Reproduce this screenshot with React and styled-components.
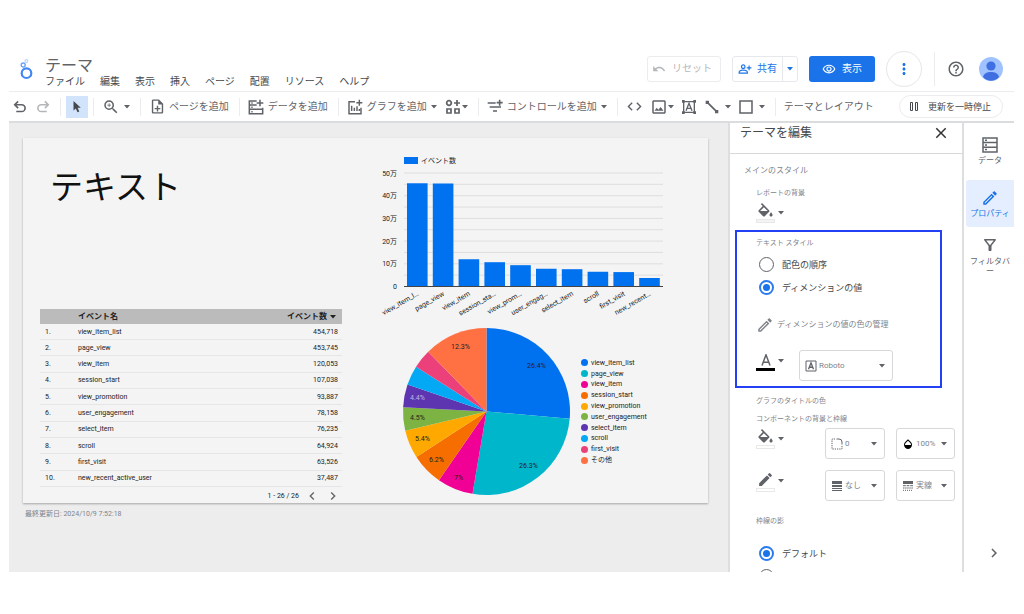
import React from "react";
import styled, { createGlobalStyle } from "styled-components";
import {
  MdUndo, MdZoomIn, MdCode, MdClose, MdHelpOutline, MdMoreVert, MdEdit, MdOutlineEdit,
  MdOutlineNoteAdd, MdOutlineImage, MdOutlineRemoveRedEye, MdOutlineFilterAlt, MdChevronRight,
  MdChevronLeft, MdOpacity, MdOutlinePersonAddAlt,
} from "react-icons/md";

const GlobalStyle = createGlobalStyle`
  *, *::before, *::after { box-sizing: border-box; }
  body {
    margin: 0;
    background: #fff;
    color: #5f6368;
    font-family: Roboto, "Noto Sans CJK JP", sans-serif;
    font-size: 10px;
  }
  button, select { font: inherit; color: inherit; margin: 0; }
  svg { display: block; flex: none; }
`;

/* ---------- frame ---------- */

const Frame = styled.div`
  display: flex;
  flex-direction: column;
  height: 100vh;
  padding: 46px 10px 42px 9px;
`;

const Header = styled.header`
  display: flex;
  align-items: center;
  flex: none;
  height: 46px;
  padding: 0 11px;
  border-bottom: 1px solid #ececee;
`;

const Brand = styled.div`
  display: flex;
  align-items: flex-start;
  gap: 12px;
  flex: 1;
  padding-top: 8px;
`;

const DocTitle = styled.h1`
  margin: 0;
  font-size: 16px;
  font-weight: 400;
  line-height: 18px;
`;

const Menu = styled.nav`
  display: flex;
  gap: 15px;
`;

const PlainButton = styled.button`
  display: flex;
  align-items: center;
  justify-content: center;
  gap: ${(p) => p.$gap || 0}px;
  padding: 0;
  border: 0;
  background: none;
  line-height: 14px;
  white-space: nowrap;
  color: ${(p) => p.$color || "inherit"};
`;

const MenuButton = styled(PlainButton)`
  color: #45484c;
`;

const Actions = styled.div`
  display: flex;
  align-items: center;
`;

const OutlineButton = styled(PlainButton)`
  height: 26px;
  padding: 0 8px 0 4px;
  border: 1px solid #ececee;
  border-radius: 3px;
`;

const SplitButton = styled.div`
  display: flex;
  height: 26px;
  margin-left: 11px;
  border: 1px solid #e6e8eb;
  border-radius: 3px;
  color: #1a73e8;
`;

const SplitPart = styled(PlainButton)`
  padding: 0 ${(p) => p.$pad}px;
  & + & { border-left: 1px solid #e6e8eb; }
`;

const ViewButton = styled(PlainButton)`
  width: 66px;
  height: 26px;
  margin-left: 11px;
  border-radius: 3px;
  background: #1a73e8;
  color: #fff;
`;

const RoundButton = styled(PlainButton)`
  width: 36px;
  height: 36px;
  margin: 0 12px 0 11px;
  border: 1px solid #e4e6e8;
  border-radius: 50%;
  color: #1a73e8;
`;

const HelpArea = styled.div`
  display: flex;
  align-items: center;
  gap: 14px;
  height: 34px;
  padding-left: 12px;
  border-left: 1px solid #ececee;
`;

/* ---------- toolbar ---------- */

const Toolbar = styled.div`
  display: flex;
  align-items: center;
  flex: none;
  height: 31px;
  padding: 0 11px 0 0;
  border-bottom: 2px solid #dadcde;
`;

const ToolGroup = styled.div`
  display: flex;
  align-items: center;
  gap: ${(p) => p.$gap || 8}px;
  height: 18px;
  padding: 0 10px 0 8px;
  &:first-child { padding: 0 8px 0 2px; }
  & + & { border-left: 1px solid #ececee; }
`;

const SelectTool = styled(PlainButton)`
  width: 22px;
  height: 22px;
  margin: 0 -5px 0 -3px;
  background: #d2e3fc;
`;

const PauseButton = styled(PlainButton)`
  height: 23px;
  margin-left: auto;
  padding: 0 11px 0 10px;
  border: 1px solid #ececee;
  border-radius: 12px;
  font-size: 9px;
  color: #45484c;
`;

/* ---------- workspace ---------- */

const Workspace = styled.div`
  display: flex;
  flex: 1;
  min-height: 0;
  overflow: hidden;
`;

const Canvas = styled.main`
  flex: 1;
  min-width: 0;
  padding: 15px 20px 0 14px;
  background: #ededed;
`;

const Report = styled.section`
  display: flex;
  gap: 33px;
  padding-left: 17px;
  background: #f4f4f4;
  box-shadow: 0 1px 2px rgba(0, 0, 0, 0.3);
`;

const TextColumn = styled.div`
  flex: 0 0 302px;
  padding-top: 30px;
`;

const ReportTitle = styled.h2`
  margin: 0 0 101px;
  padding-left: 10px;
  font-size: 33px;
  font-weight: 400;
  line-height: 40px;
  color: #111;
`;

const EventTable = styled.table`
  width: 100%;
  height: 178px;
  border-collapse: collapse;
  font-size: 7px;
  line-height: 10px;
  color: #222;

  th, td { padding: 0 4px; text-align: left; }
  th { height: 15px; background: #bbb; font-size: 8px; font-weight: 700; }
  td { border-bottom: 1px solid #e6e6e6; }
  td:first-child { padding-left: 5px; }
  th:first-child, td:first-child { width: 34px; }
  th:last-child, td:last-child { text-align: right; }
`;

const SortLabel = styled(PlainButton)`
  margin: 0 2px 0 auto;
  line-height: 10px;
  font-weight: 700;
`;

const Pager = styled.div`
  display: flex;
  align-items: center;
  justify-content: flex-end;
  gap: 5px;
  height: 16px;
  padding: 2px 1px 0 0;
  font-size: 7px;
  color: #222;
`;

const ChartColumn = styled.div`
  padding: 12px 0 2px;
`;

const PieRow = styled.div`
  display: flex;
  align-items: center;
  gap: 6px;
  padding: 5px 0 0 25px;
`;

const Legend = styled.ul`
  display: grid;
  grid-auto-rows: 1fr;
  height: 108px;
  margin: 0;
  padding: 0;
  list-style: none;
  font-size: 7px;
  line-height: 10px;
  color: #222;
`;

const LegendItem = styled.li`
  display: flex;
  align-items: center;
  gap: 3px;
  &::before {
    content: "";
    width: 7px;
    height: 7px;
    border-radius: 50%;
    background: ${(p) => p.$color};
  }
`;

const ChartText = styled.text`
  font-size: 7px;
  fill: ${(p) => p.$fill || "#222"};
`;

const Updated = styled.p`
  margin: 0;
  padding: 5px 2px;
  font-size: 7px;
  line-height: 12px;
  color: #80848a;
`;

/* ---------- theme panel ---------- */

const Panel = styled.aside`
  flex: 0 0 236px;
  overflow: hidden;
  border-left: 2px solid #dcdee0;
  border-right: 2px solid #dcdee0;
  background: #fff;
`;

const PanelHeader = styled.div`
  display: flex;
  align-items: center;
  justify-content: space-between;
  padding: 1px 12px 11px 10px;
  border-bottom: 1px solid #d6d8da;
`;

const PanelTitle = styled.h2`
  margin: 0;
  font-size: 12px;
  font-weight: 400;
  line-height: 18px;
  color: #45484c;
`;

const SectionTitle = styled.h3`
  margin: 11px 0 10px 14px;
  font-size: 8px;
  font-weight: 400;
  line-height: 12px;
  color: #80848a;
`;

const Block = styled.div`
  padding-left: 26px;
`;

const Highlight = styled.section`
  margin: 7px 20px 7px 5px;
  padding: 5px 0 5px 19px;
  border: 2px solid #2440f5;
`;

const Label = styled.h4`
  margin: ${(p) => p.$top || 0}px 0 3px;
  font-size: 7px;
  font-weight: 400;
  line-height: 12px;
  color: #80848a;
`;

const RadioGroup = styled.div`
  padding-top: ${(p) => p.$top || 0}px;
`;

const RadioRow = styled.label`
  display: flex;
  align-items: center;
  gap: 8px;
  height: 23px;
  padding-left: 3px;
  font-size: 9px;
  color: #45484c;
`;

const Radio = styled.input`
  appearance: none;
  display: grid;
  place-items: center;
  width: 15px;
  height: 15px;
  margin: 0;
  border: 1px solid #5f6368;
  border-radius: 50%;
  &:checked { border: 2px solid #2a7bf0; }
  &:checked::before {
    content: "";
    width: 7px;
    height: 7px;
    border-radius: 50%;
    background: #1a73e8;
  }
`;

const ManageButton = styled(PlainButton)`
  margin: 18px 0 17px;
  height: 16px;
  font-size: 8px;
  color: #80848a;
`;

const ControlRow = styled.div`
  display: flex;
  align-items: flex-start;
  gap: 11px;
  margin-bottom: ${(p) => p.$bottom || 0}px;
`;

const ColorButton = styled(PlainButton)`
  justify-content: flex-start;
  width: ${(p) => p.$width || 28}px;
`;

const Swatch = styled.span`
  display: flex;
  flex-direction: column;
  align-items: center;
  width: 19px;
  padding-top: ${(p) => (p.$solid ? 4 : 1)}px;
  &::after {
    content: "";
    width: 19px;
    height: ${(p) => (p.$solid ? 3 : 4)}px;
    border: 1px solid ${(p) => (p.$solid ? "#000" : "#e8e8e8")};
    background: ${(p) => p.$fill};
  }
`;

const SelectBox = styled.label`
  display: flex;
  align-items: center;
  width: ${(p) => p.$width}px;
  height: 31px;
  padding: 0 7px 0 5px;
  border: 1px solid #d6d8da;
  border-radius: 3px;
  font-size: 8px;
`;

const Select = styled.select`
  appearance: none;
  flex: 1;
  min-width: 0;
  padding: 0 0 0 2px;
  border: 0;
  background: none;
  line-height: 14px;
  color: #80848a;
`;

/* ---------- right rail ---------- */

const Rail = styled.nav`
  display: flex;
  flex-direction: column;
  flex: 0 0 50px;
  padding: 5px 0 10px 2px;
`;

const RailTab = styled(PlainButton)`
  flex-direction: column;
  justify-content: flex-start;
  height: ${(p) => (p.$on ? 47 : 52)}px;
  padding-top: 9px;
  border-radius: 3px 0 0 3px;
  background: ${(p) => (p.$on ? "#e4eefe" : "none")};
  color: ${(p) => (p.$on ? "#1a73e8" : "#5f6368")};
  font-size: 8px;
  line-height: 10px;
`;

const RailChevron = styled(PlainButton)`
  margin-top: auto;
  padding-left: 8px;
`;

/* ---------- icons ---------- */

const Caret = () => (
  <svg width="6" height="4" viewBox="0 0 6 4" aria-hidden="true"><path d="M0 0h6L3 3.5z" fill="currentColor" /></svg>
);

const Line = ({ size = 16, children, stroke = 2, ...rest }) => (
  <svg width={size} height={size} viewBox="0 0 24 24" fill="none" stroke="currentColor" strokeWidth={stroke} aria-hidden="true" {...rest}>
    {children}
  </svg>
);

const Logo = () => (
  <svg width="13" height="23" viewBox="0 -2 13 23" fill="none" aria-hidden="true">
    <circle cx="6.500" cy="14.200" r="4.800" stroke="#4285f4" strokeWidth="2.200" />
    <circle cx="3.200" cy="6" r="2" stroke="#6ba3f8" strokeWidth="1.400" />
    <circle cx="6.400" cy="2" r="1.400" stroke="#b9d3fb" strokeWidth="1.100" />
  </svg>
);

const Undo = () => (
  <Line size={18} stroke={2.2}><path d="M9.500 4.500 5 9l4.500 4.500M5.500 9h8.800a4.500 4.500 0 0 1 0 9H7" /></Line>
);

const Redo = () => (
  <Line size={18} stroke={2.2}><path d="M14.500 4.500 19 9l-4.500 4.500M18.500 9H9.700a4.500 4.500 0 0 0 0 9H17" /></Line>
);

const Pointer = () => (
  <svg width="10" height="13" viewBox="0 0 10 13" aria-hidden="true">
    <path d="M1.500 1v9.500l2.300-2 1.700 3.700 1.800-.8-1.700-3.600h3.200z" fill="#45484c" />
  </svg>
);

const AddData = () => (
  <Line stroke={2.3}><path d="M13 3H2v19h20v-9M2 9h11M2 15.500h20M18 1v10M13 6h10" /><path d="M5 6h2M5 12.300h2M5 19h2" /></Line>
);

const AddChart = () => (
  <Line stroke={2.2}><path d="M12 4H3v18h18v-9M18.500 1v9M14 5.500h9M7 10v8M11 13v5M15 11v7M18.500 15v3" /></Line>
);

const Community = () => (
  <Line stroke={2.6}><circle cx="6" cy="6" r="3.500" /><path d="M3 15h6v6H3zM15 15h6v6h-6zM18 1.500v9M13.500 6h9" /></Line>
);

const AddControl = () => (
  <Line stroke={2.4}><path d="M1 6h12M4 12h17M9 18h6M19 1v9M14.500 5.500h9" /></Line>
);

const TextBox = () => (
  <Line>
    <path d="M4 4h16v16H4z" />
    <path d="M7.500 17.500 12 6.500l4.500 11M9 14h6" />
    <path d="M1.500 1.500h4v4h-4zM18.500 1.500h4v4h-4zM1.500 18.500h4v4h-4zM18.500 18.500h4v4h-4z" fill="currentColor" stroke="none" />
  </Line>
);

const LineTool = () => (
  <Line stroke={2.6}><path d="m5 5 14 14" /><path d="M2.500 2.500h5v5h-5zM16.500 16.500h5v5h-5z" fill="currentColor" stroke="none" /></Line>
);

const Square = () => <Line stroke={2.3}><path d="M3 3h18v18H3z" /></Line>;

const Bucket = () => (
  <svg width="19" height="16" viewBox="0 0 24 20" fill="currentColor" aria-hidden="true">
    <path d="M16.560 8.940 7.620 0 6.210 1.410l2.380 2.380-5.150 5.150c-.59.59-.59 1.540 0 2.120l5.500 5.500c.29.29.68.44 1.060.44s.77-.15 1.060-.44l5.500-5.500c.59-.58.59-1.530 0-2.120zM5.210 10 10 5.210 14.790 10H5.210zM19 11.500s-2 2.170-2 3.500c0 1.100.9 2 2 2s2-.9 2-2c0-1.330-2-3.500-2-3.500z" />
  </svg>
);

const LetterA = () => (
  <svg width="16" height="14" viewBox="0 0 16 14" fill="none" stroke="currentColor" strokeWidth="1.500" aria-hidden="true">
    <path d="M4 11.500 8 .8l4 10.700M5.400 8.300h5.200" />
  </svg>
);

const FontBox = () => (
  <Line size={12}><path d="M2 2h20v20H2z" /><path d="M7 18.500 12 5.500l5 13M8.500 14.500h7" strokeWidth="2.600" /></Line>
);

const Corner = () => (
  <Line size={12}>
    <path d="M11 2h5a6 6 0 0 1 6 6v5" />
    <path d="M8 2H2v20h20v-6" strokeDasharray="2.500 2" />
  </Line>
);

const Weight = () => (
  <svg width="12" height="10" viewBox="0 0 12 10" fill="#5f6368" aria-hidden="true">
    <path d="M1 0h10v3H1zM1 4h10v2H1zM1 7h10v1H1zM1 9h10v1H1z" />
  </svg>
);

const Dashes = () => (
  <svg width="12" height="10" viewBox="0 0 12 10" stroke="#5f6368" aria-hidden="true">
    <path d="M1 1.500h10" strokeWidth="3" />
    <path d="M1 4.700h10" strokeDasharray="2.800 .8" />
    <path d="M1 7h10" strokeDasharray="1.500 .6" />
    <path d="M1 9.300h10" strokeDasharray="1 1" />
  </svg>
);

const DataTable = () => (
  <svg width="16" height="16" viewBox="0 0 16 16" fill="none" stroke="currentColor" strokeWidth="1.500" aria-hidden="true">
    <path d="M1 1h14v14H1zM1 5.600h14M1 10.300h14" />
    <path d="M3 3.300h2M3 8h2M3 12.600h2" />
  </svg>
);

const Pause = () => (
  <svg width="8" height="9" viewBox="0 0 8 9" fill="none" stroke="currentColor" aria-hidden="true">
    <path d="M.5.5h2v8h-2zM5.500.5h2v8h-2z" />
  </svg>
);

const Avatar = () => (
  <svg width="24" height="24" viewBox="0 0 24 24" aria-hidden="true">
    <circle cx="12" cy="12" r="12" fill="#a0c3ff" />
    <circle cx="12" cy="9" r="4.600" fill="#3f6fe0" />
    <path d="M4 20c1-4 4.500-5 8-5s7 1 8 5c-2 2.500-5 3.700-8 3.700S6 22.500 4 20z" fill="#3f6fe0" />
  </svg>
);

/* ---------- data ---------- */

const events = [
  ["view_item_list", 454718, "#0072f0", "view_item_l…", "26.4%", 50, -46],
  ["page_view", 453745, "#00b6cb", "page_view", "26.3%", 42, 54],
  ["view_item", 120053, "#f10096", "view_item", "7%", -28, 66],
  ["session_start", 107038, "#f66d00", "session_sta…", "6.2%", -50, 48],
  ["view_promotion", 93887, "#ffa800", "view_prom…", "5.4%", -64, 27],
  ["user_engagement", 78158, "#7cb342", "user_engag…", "4.5%", -69, 6],
  ["select_item", 76235, "#5e35b1", "select_item", "4.4%", -69, -14],
  ["scroll", 64924, "#03a9f4", "scroll"],
  ["first_visit", 63526, "#ec407a", "first_visit"],
  ["new_recent_active_user", 37487, "#0072f0", "new_recent…"],
];

const slices = [...events.slice(0, 9), ["その他", 212100, "#ff7043", "", "12.3%", -26, -65]];

function BarChart() {
  return (
    <svg width="295" height="170" viewBox="0 0 295 170" role="img" aria-label="イベント数">
      <rect x="29" y="7" width="14" height="7" fill="#0072f0" />
      <ChartText x="46" y="13">イベント数</ChartText>
      {Array.from({ length: 10 }, (_, i) => (
        <path key={i} d={`M29 ${23 + i * 11.35}h259`} stroke="#dedede" />
      ))}
      {["50万", "40万", "30万", "20万", "10万", "0"].map((t, i) => (
        <ChartText key={t} x="22" y={25.5 + i * 22.7} textAnchor="end">{t}</ChartText>
      ))}
      {events.map(([name, value, , short], i) => {
        const h = (value / 500000) * 113.5;
        const x = 32 + i * 25.8;
        return (
          <g key={name}>
            <rect x={x} y={136.5 - h} width="20.600" height={h} fill="#0072f0" />
            <ChartText textAnchor="end" transform={`translate(${x + 12} 145) rotate(-30)`}>{short}</ChartText>
          </g>
        );
      })}
      <path d="M29 136.500h259" stroke="#444" />
    </svg>
  );
}

function PieChart() {
  const total = slices.reduce((s, e) => s + e[1], 0);
  const c = 86.5;
  const r = 83.5;
  let a = 0;
  const paths = slices.map(([name, v, color]) => {
    const b = a + (v / total) * Math.PI * 2;
    const d = `M${c} ${c}L${c + r * Math.sin(a)} ${c - r * Math.cos(a)}A${r} ${r} 0 0 1 ${c + r * Math.sin(b)} ${c - r * Math.cos(b)}z`;
    a = b;
    return <path key={name} d={d} fill={color} />;
  });
  return (
    <svg width="175" height="173" viewBox="0 0 175 173" role="img" aria-label="イベント数の割合">
      {paths}
      {slices.filter((e) => e[4]).map(([name, , , , pct, dx, dy]) => (
        <ChartText key={name} x={c + dx} y={c + dy + 2.5} textAnchor="middle" $fill={name === "select_item" ? "#c4b3e0" : "#222"}>{pct}</ChartText>
      ))}
    </svg>
  );
}

function IconSelect({ icon, value, width, label }) {
  return (
    <SelectBox $width={width}>
      {icon}
      <Select aria-label={label} defaultValue={value}><option>{value}</option></Select>
      <Caret />
    </SelectBox>
  );
}

function ColorControl({ label, icon, fill = "#fff", solid, width }) {
  return (
    <ColorButton aria-label={label} $gap={3} $width={width}>
      <Swatch $fill={fill} $solid={solid}>{icon}</Swatch>
      <Caret />
    </ColorButton>
  );
}

export default function App() {
  return (
    <Frame>
      <GlobalStyle />
      <Header>
        <Brand>
          <Logo />
          <div>
            <DocTitle>テーマ</DocTitle>
            <Menu>
              {["ファイル", "編集", "表示", "挿入", "ページ", "配置", "リソース", "ヘルプ"].map((m) => (
                <MenuButton key={m}>{m}</MenuButton>
              ))}
            </Menu>
          </div>
        </Brand>
        <Actions>
          <OutlineButton $gap={6} $color="#b4b7ba"><MdUndo size={14} />リセット</OutlineButton>
          <SplitButton>
            <SplitPart $gap={5} $pad={5}><MdOutlinePersonAddAlt size={14} />共有</SplitPart>
            <SplitPart $pad={4} aria-label="共有オプション"><Caret /></SplitPart>
          </SplitButton>
          <ViewButton $gap={6}><MdOutlineRemoveRedEye size={14} />表示</ViewButton>
          <RoundButton aria-label="その他"><MdMoreVert size={18} /></RoundButton>
          <HelpArea>
            <PlainButton aria-label="ヘルプ"><MdHelpOutline size={18} /></PlainButton>
            <PlainButton aria-label="アカウント"><Avatar /></PlainButton>
          </HelpArea>
        </Actions>
      </Header>

      <Toolbar>
        <ToolGroup $gap={5}>
          <PlainButton aria-label="元に戻す"><Undo /></PlainButton>
          <PlainButton aria-label="やり直し" $color="#b4b7ba"><Redo /></PlainButton>
        </ToolGroup>
        <ToolGroup><SelectTool aria-label="選択"><Pointer /></SelectTool></ToolGroup>
        <ToolGroup><PlainButton aria-label="ズーム" $gap={4}><MdZoomIn size={18} /><Caret /></PlainButton></ToolGroup>
        <ToolGroup><PlainButton $gap={3}><MdOutlineNoteAdd size={17} />ページを追加</PlainButton></ToolGroup>
        <ToolGroup><PlainButton $gap={4}><AddData />データを追加</PlainButton></ToolGroup>
        <ToolGroup>
          <PlainButton $gap={4}><AddChart />グラフを追加<Caret /></PlainButton>
          <PlainButton aria-label="コミュニティ" $gap={1}><Community /><Caret /></PlainButton>
        </ToolGroup>
        <ToolGroup><PlainButton $gap={4}><AddControl />コントロールを追加<Caret /></PlainButton></ToolGroup>
        <ToolGroup $gap={7}>
          <PlainButton aria-label="埋め込み"><MdCode size={17} /></PlainButton>
          <PlainButton aria-label="画像"><MdOutlineImage size={18} /><Caret /></PlainButton>
          <PlainButton aria-label="テキスト"><TextBox /></PlainButton>
          <PlainButton aria-label="線" $gap={5}><LineTool /><Caret /></PlainButton>
          <PlainButton aria-label="図形" $gap={5}><Square /><Caret /></PlainButton>
        </ToolGroup>
        <ToolGroup><PlainButton>テーマとレイアウト</PlainButton></ToolGroup>
        <PauseButton $gap={10}><Pause />更新を一時停止</PauseButton>
      </Toolbar>

      <Workspace>
        <Canvas>
          <Report>
            <TextColumn>
              <ReportTitle>テキスト</ReportTitle>
              <EventTable>
                <thead>
                  <tr>
                    <th aria-label="番号" />
                    <th>イベント名</th>
                    <th><SortLabel $gap={3}>イベント数<Caret /></SortLabel></th>
                  </tr>
                </thead>
                <tbody>
                  {events.map(([name, value], i) => (
                    <tr key={name}>
                      <td>{i + 1}.</td>
                      <td>{name}</td>
                      <td>{value.toLocaleString("en-US")}</td>
                    </tr>
                  ))}
                </tbody>
              </EventTable>
              <Pager>
                1 - 26 / 26
                <PlainButton aria-label="前へ" $color="#5f6368"><MdChevronLeft size={16} /></PlainButton>
                <PlainButton aria-label="次へ" $color="#5f6368"><MdChevronRight size={16} /></PlainButton>
              </Pager>
            </TextColumn>
            <ChartColumn>
              <BarChart />
              <PieRow>
                <PieChart />
                <Legend>
                  {slices.map(([name, , color]) => <LegendItem key={name} $color={color}>{name}</LegendItem>)}
                </Legend>
              </PieRow>
            </ChartColumn>
          </Report>
          <Updated>最終更新日: 2024/10/9 7:52:18</Updated>
        </Canvas>

        <Panel>
          <PanelHeader>
            <PanelTitle>テーマを編集</PanelTitle>
            <PlainButton aria-label="閉じる" $color="#333"><MdClose size={18} /></PlainButton>
          </PanelHeader>
          <SectionTitle>メインのスタイル</SectionTitle>
          <Block>
            <Label>レポートの背景</Label>
            <ColorControl label="レポートの背景" icon={<Bucket />} fill="#f4f4f4" />
          </Block>
          <Highlight>
            <Label>テキスト スタイル</Label>
            <RadioGroup $top={1} role="radiogroup" aria-label="テキスト スタイル">
              <RadioRow><Radio type="radio" name="text-style" />配色の順序</RadioRow>
              <RadioRow><Radio type="radio" name="text-style" defaultChecked />ディメンションの値</RadioRow>
            </RadioGroup>
            <ManageButton $gap={3}><MdOutlineEdit size={18} />ディメンションの値の色の管理</ManageButton>
            <ControlRow>
              <ColorControl label="文字色" icon={<LetterA />} fill="#000" solid width={32} />
              <IconSelect icon={<FontBox />} value="Roboto" width={94} label="フォント" />
            </ControlRow>
          </Highlight>
          <Block>
            <Label>グラフのタイトルの色</Label>
            <Label $top={6}>コンポーネントの背景と枠線</Label>
            <ControlRow $bottom={11}>
              <ColorControl label="背景色" icon={<Bucket />} width={58} />
              <IconSelect icon={<Corner />} value="0" width={60} label="角の丸み" />
              <IconSelect icon={<MdOpacity size={12} color="#000" />} value="100%" width={59} label="不透明度" />
            </ControlRow>
            <ControlRow>
              <ColorControl label="枠線の色" icon={<MdEdit size={17} />} width={58} />
              <IconSelect icon={<Weight />} value="なし" width={60} label="枠線の太さ" />
              <IconSelect icon={<Dashes />} value="実線" width={59} label="枠線のスタイル" />
            </ControlRow>
            <Label $top={14}>枠線の影</Label>
            <RadioGroup $top={12} role="radiogroup" aria-label="枠線の影">
              <RadioRow><Radio type="radio" name="shadow" defaultChecked />デフォルト</RadioRow>
              <RadioRow><Radio type="radio" name="shadow" aria-label="カスタム" /></RadioRow>
            </RadioGroup>
          </Block>
        </Panel>

        <Rail>
          <RailTab $gap={3}><DataTable />データ</RailTab>
          <RailTab $on $gap={2}><MdOutlineEdit size={18} />プロパティ</RailTab>
          <RailTab $gap={3}><MdOutlineFilterAlt size={18} /><span>フィルタバ<br />ー</span></RailTab>
          <RailChevron aria-label="パネルを閉じる"><MdChevronRight size={18} /></RailChevron>
        </Rail>
      </Workspace>
    </Frame>
  );
}
